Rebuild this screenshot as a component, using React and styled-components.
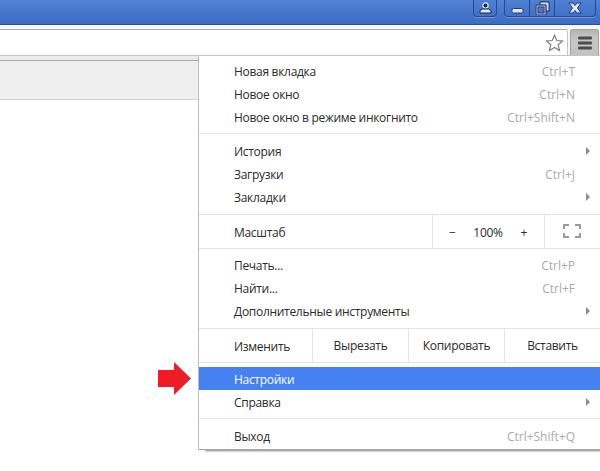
import React from 'react';
import styled, { createGlobalStyle } from 'styled-components';

const GlobalStyle = createGlobalStyle`
  html, body {
    margin: 0;
    padding: 0;
    background: #ffffff;
    overflow: hidden;
  }
  body {
    font-family: "Open Sans", "Liberation Sans", sans-serif;
  }
`;

const Page = styled.div`
  position: relative;
  width: 600px;
  height: 471px;
  overflow: hidden;
  background: #ffffff;
`;

const TitleBar = styled.div`
  height: 24px;
  display: flex;
  justify-content: flex-end;
  align-items: flex-start;
  padding-right: 4px;
  gap: 7px;
  background: linear-gradient(180deg, #5283d6 0%, #3c6bc3 100%);
  border-bottom: 1px solid #2c4f94;
`;

const CaptionGroup = styled.div`
  display: flex;
  height: 16px;
  background: linear-gradient(180deg, #4f80d2 0%, #4270c6 100%);
  border: 1px solid #27488c;
  border-top: none;
  border-radius: 0 0 4px 4px;
  box-shadow: 0 1px 0 rgba(255, 255, 255, 0.25);
`;

const CaptionButton = styled.div`
  width: ${(p) => p.$w}px;
  display: flex;
  align-items: center;
  justify-content: center;
  & + & {
    border-left: 1px solid #27488c;
  }
`;

const MinimizeGlyph = styled.svg`
  margin-top: 5px;
`;

const Toolbar = styled.div`
  height: 31px;
  display: flex;
  padding-top: 4px;
  box-sizing: border-box;
  background: #f7f7f7;
  border-bottom: 1px solid #c4c4c4;
`;

const Omnibox = styled.div`
  width: 568px;
  height: 26px;
  box-sizing: border-box;
  display: flex;
  align-items: center;
  justify-content: flex-end;
  padding-right: 3px;
  background: #ffffff;
  border-top: 1px solid #ababab;
  border-right: 1px solid #c4c4c4;
  border-radius: 0 2px 0 0;
`;

const MenuButton = styled.div`
  width: 29px;
  height: 26px;
  margin-left: 2px;
  display: flex;
  align-items: center;
  justify-content: center;
  box-sizing: border-box;
  background: linear-gradient(180deg, #b4b4b4 0%, #c6c6c6 30%, #c2c2c2 100%);
  border: 1px solid #a2a2a2;
  border-bottom: none;
  border-radius: 3px 3px 0 0;
`;

const BookmarkStrip = styled.div`
  height: 4px;
  background: #ebebeb;
  border-bottom: 1px solid #a8a8a8;
`;

const InfoStrip = styled.div`
  height: 38px;
  background: #efefef;
  border-bottom: 1px solid #d0d0d0;
`;

const Menu = styled.div`
  position: absolute;
  left: 198px;
  top: 56px;
  width: 402px;
  height: 394px;
  box-sizing: border-box;
  padding-top: 3px;
  background: #ffffff;
  border-left: 1px solid #bdbdbd;
  border-bottom: 1px solid #a6a6a6;
  box-shadow: 5px 3px 2px -2px rgba(0, 0, 0, 0.5);
  font-size: 12px;
  letter-spacing: -0.3px;
  color: #2a2a2a;
`;

const Section = styled.div`
  padding: ${(p) => p.$pad || '0'};
  & + & {
    border-top: 1px solid #e4e4e4;
  }
`;

const Row = styled.div`
  height: 23px;
  display: flex;
  align-items: center;
  justify-content: space-between;
  padding: 1px 25px 0 35px;
  box-sizing: border-box;
  position: relative;
  background: ${(p) => (p.$active ? '#4581f0' : 'transparent')};
  color: ${(p) => (p.$active ? '#ffffff' : 'inherit')};
`;

const Shortcut = styled.span`
  color: #a9a9a9;
  letter-spacing: 0;
`;

const SubArrow = styled.span`
  position: absolute;
  right: 10px;
  top: 8px;
  width: 0;
  height: 0;
  border-left: 4px solid #8a8a8a;
  border-top: 4px solid transparent;
  border-bottom: 4px solid transparent;
`;

const ToolRow = styled.div`
  height: 33px;
  display: flex;
  align-items: stretch;
`;

const ToolLabel = styled.div`
  flex: 1;
  display: flex;
  align-items: center;
  padding: 1px 0 0 35px;
`;

const ToolCell = styled.div`
  width: ${(p) => p.$w}px;
  display: flex;
  align-items: center;
  justify-content: ${(p) => p.$justify || 'center'};
  padding: ${(p) => p.$pad || '0'};
  box-sizing: border-box;
  border-left: 1px solid #e4e4e4;
`;

const ArrowMark = styled.svg`
  position: absolute;
  left: 158px;
  top: 362px;
`;

const firstGroup = [
  { label: 'Новая вкладка', keys: 'Ctrl+T' },
  { label: 'Новое окно', keys: 'Ctrl+N' },
  { label: 'Новое окно в режиме инкогнито', keys: 'Ctrl+Shift+N' },
];

const secondGroup = [
  { label: 'История', sub: true },
  { label: 'Загрузки', keys: 'Ctrl+J' },
  { label: 'Закладки', sub: true },
];

const pageGroup = [
  { label: 'Печать...', keys: 'Ctrl+P' },
  { label: 'Найти...', keys: 'Ctrl+F' },
  { label: 'Дополнительные инструменты', sub: true },
];

const MenuRow = ({ label, keys, sub, active }) => (
  <Row $active={active}>
    <span>{label}</span>
    {keys && <Shortcut>{keys}</Shortcut>}
    {sub && <SubArrow />}
  </Row>
);

const App = () => (
  <>
    <GlobalStyle />
    <Page>
      <TitleBar>
        <CaptionGroup>
          <CaptionButton $w={22}>
            <svg width="13" height="12" viewBox="0 0 13 12">
              <circle cx="6.5" cy="3.5" r="2.6" fill="#10244f" stroke="#dfe8f8" strokeWidth="1.2" />
              <path d="M1 11V8.5L3.5 7h6L12 8.5V11z" fill="#dfe8f8" stroke="#10244f" strokeWidth="1" />
            </svg>
          </CaptionButton>
        </CaptionGroup>
        <CaptionGroup>
          <CaptionButton $w={24}>
            <MinimizeGlyph width="13" height="8" viewBox="0 0 13 8">
              <rect x="1" y="1.5" width="11" height="4.5" rx="1.5" fill="#dfe8f8" stroke="#1f3a78" />
            </MinimizeGlyph>
          </CaptionButton>
          <CaptionButton $w={24}>
            <svg width="15" height="14" viewBox="0 0 15 14">
              <path d="M5 1h9v9h-3V4H5z" fill="#dfe8f8" stroke="#10244f" strokeWidth="1" />
              <rect x="2" y="5" width="8" height="8" fill="none" stroke="#10244f" strokeWidth="2.6" />
              <rect x="2" y="5" width="8" height="8" fill="none" stroke="#dfe8f8" strokeWidth="0.9" />
            </svg>
          </CaptionButton>
          <CaptionButton $w={40}>
            <svg width="14" height="12" viewBox="0 0 14 12">
              <path d="M1 1h4l2 2.5L9 1h4L9.5 6 13 11H9L7 8.5 5 11H1l3.5-5z" fill="#dfe8f8" stroke="#1f3a78" />
            </svg>
          </CaptionButton>
        </CaptionGroup>
      </TitleBar>

      <Toolbar>
        <Omnibox>
          <svg width="19" height="18" viewBox="0 0 19 18">
            <path d="M9.5 1.2l2.3 5.3 5.7.5-4.3 3.8 1.3 5.6-5-3-5 3 1.3-5.6L1.5 7l5.7-.5z" fill="#fff" stroke="#7f7f7f" strokeWidth="1.2" />
          </svg>
        </Omnibox>
        <MenuButton>
          <svg width="14" height="14" viewBox="0 0 14 14">
            <rect x="0" y="0.5" width="14" height="3" rx="1" fill="#4d4d4d" />
            <rect x="0" y="5.5" width="14" height="3" rx="1" fill="#4d4d4d" />
            <rect x="0" y="10.5" width="14" height="3" rx="1" fill="#4d4d4d" />
          </svg>
        </MenuButton>
      </Toolbar>
      <BookmarkStrip />
      <InfoStrip />

      <Menu>
        <Section $pad="0 0 5px">
          {firstGroup.map((item) => (
            <MenuRow key={item.label} {...item} />
          ))}
        </Section>
        <Section $pad="5px 0 6px">
          {secondGroup.map((item) => (
            <MenuRow key={item.label} {...item} />
          ))}
        </Section>
        <Section>
          <ToolRow>
            <ToolLabel>Масштаб</ToolLabel>
            <ToolCell $w={112} $justify="space-between" $pad="1px 17px 0 16px">
              <span>−</span>
              <span>100%</span>
              <span>+</span>
            </ToolCell>
            <ToolCell $w={56} $pad="0 2px 2px 0">
              <svg width="18" height="14" viewBox="0 0 18 14">
                <path d="M1 5V1h5M12 1h5v4M17 9v4h-5M6 13H1V9" fill="none" stroke="#9a9a9a" strokeWidth="2" />
              </svg>
            </ToolCell>
          </ToolRow>
        </Section>
        <Section $pad="4px 0 6px">
          {pageGroup.map((item) => (
            <MenuRow key={item.label} {...item} />
          ))}
        </Section>
        <Section>
          <ToolRow>
            <ToolLabel>Изменить</ToolLabel>
            <ToolCell $w={96}>Вырезать</ToolCell>
            <ToolCell $w={96}>Копировать</ToolCell>
            <ToolCell $w={96}>Вставить</ToolCell>
          </ToolRow>
        </Section>
        <Section $pad="4px 0 5px">
          <MenuRow label="Настройки" active />
          <MenuRow label="Справка" sub />
        </Section>
        <Section $pad="5px 0 2px">
          <MenuRow label="Выход" keys="Ctrl+Shift+Q" />
        </Section>
      </Menu>

      <ArrowMark width="33" height="33" viewBox="0 0 33 33">
        <path d="M0 8h16V0l17 16.5L16 33v-8H0z" fill="#ee1c25" />
      </ArrowMark>
    </Page>
  </>
);

export default App;
